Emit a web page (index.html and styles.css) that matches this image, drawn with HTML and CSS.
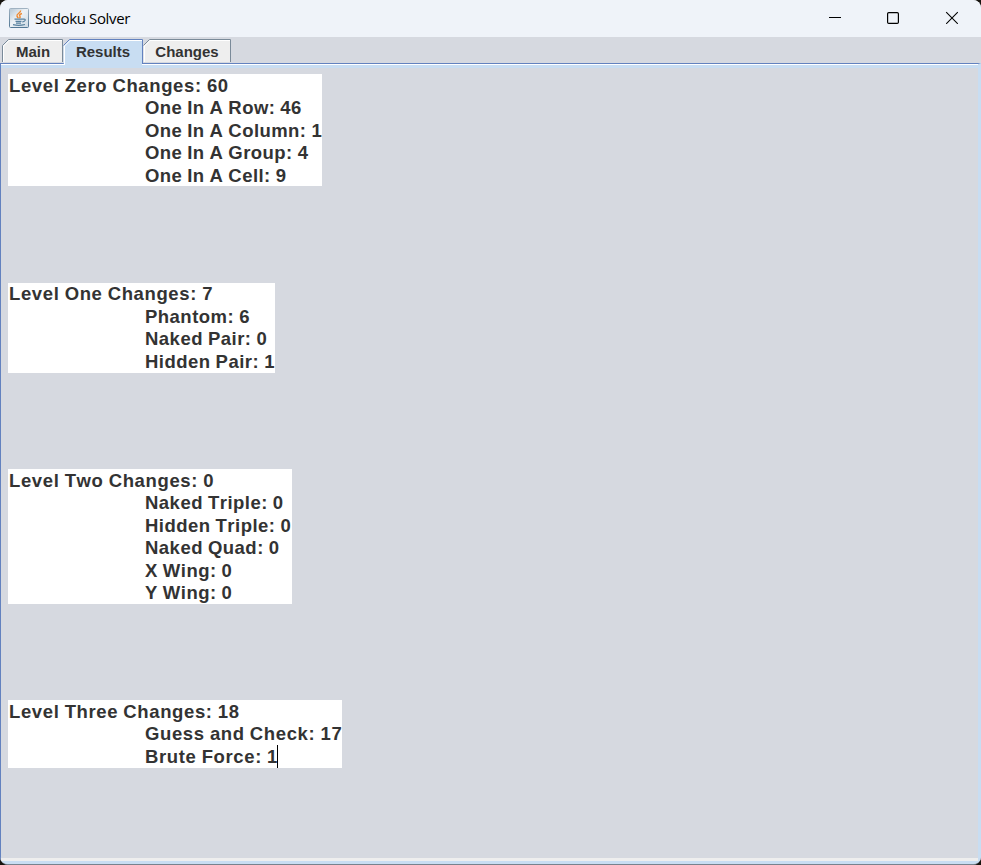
FILE: index.html
```html
<!DOCTYPE html>
<html lang="en">
<head>
<meta charset="utf-8">
<title>Sudoku Solver</title>
<link rel="stylesheet" href="styles.css">
</head>
<body>
<div class="window">
  <header class="titlebar">
    <svg class="logo" width="20" height="20" viewBox="0 0 20 20">
      <defs><linearGradient id="g" x1="0" y1="0" x2="1" y2="1"><stop offset="0" stop-color="#b4c4d2"/><stop offset=".45" stop-color="#edf2f6"/><stop offset="1" stop-color="#cbd8e2"/></linearGradient>
      <linearGradient id="b" x1="0" y1="0" x2="0" y2="1"><stop offset="0" stop-color="#a0b2c2"/><stop offset="1" stop-color="#527895"/></linearGradient></defs>
      <rect x=".5" y=".5" width="19" height="19" rx="1" fill="url(#g)" stroke="url(#b)"/>
      <path d="M11.500 2.500C12 5 7.500 5.500 8 8q.3 1.300 1.500 2M13 5.500Q9.500 6.500 11 8.300q.6 1-.7 1.900" fill="none" stroke="#ee8b35" stroke-width="1.500"/>
      <path d="M5.500 11.200h8M6.500 13.300h6M7 15.200h5M13.500 11.200q3.500-.6 2.500 1.300-.8 1.300-2.800 1.500M4 16.700q6 1.400 12-.2" fill="none" stroke="#57809e" stroke-width="1.200"/>
    </svg>
    <span class="title">Sudoku Solver</span>
    <svg class="controls" width="130" height="14" viewBox="0 0 130 14" fill="none" stroke="#000">
      <path d="M0 7.500h12" stroke-width="1"/>
      <rect x="58.600" y="2.600" width="10.800" height="10.800" rx="1.200" stroke-width="1.200"/>
      <path d="M117.200 2.200l11.600 11.600M128.800 2.200l-11.600 11.600" stroke-width="1.100"/>
    </svg>
  </header>
  <nav class="tabs">
    <div class="tab main"><svg width="61" height="23"><path d="M.5 23V6.500L6.500.5H60.500V23" fill="#eee" stroke="#7a8a99"/><path d="M1.500 23V7L7 1.500H60" fill="none" stroke="#fff"/></svg><span>Main</span></div>
    <div class="tab results"><svg width="80" height="26"><path d="M.5 24.500V6.500L6.500.5H79.500V24.500H79V26H1V24.500Z" fill="#c8ddf2"/><path d="M1.500 26V7L7 1.500H79" fill="none" stroke="#fff"/><path d="M.5 6.500L6.500.5H79.500V25" fill="none" stroke="#6382bf"/></svg><span>Results</span></div>
    <div class="tab changes"><svg width="88" height="23"><path d="M.5 6.500L6.500.5H87.500V23H.5Z" fill="#eee"/><path d="M1.500 23V7L7 1.500H87" fill="none" stroke="#fff"/><path d="M.5 6.500L6.500.5H87.500V23" fill="none" stroke="#7a8a99"/></svg><span>Changes</span></div>
  </nav>
  <main class="content">
    <section class="level zero"><p>Level Zero Changes: 60</p><p class="sub">One In A Row: 46</p><p class="sub">One In A Column: 1</p><p class="sub">One In A Group: 4</p><p class="sub">One In A Cell: 9</p></section>
    <section class="level one"><p>Level One Changes: 7</p><p class="sub">Phantom: 6</p><p class="sub">Naked Pair: 0</p><p class="sub">Hidden Pair: 1</p></section>
    <section class="level two"><p>Level Two Changes: 0</p><p class="sub">Naked Triple: 0</p><p class="sub">Hidden Triple: 0</p><p class="sub">Naked Quad: 0</p><p class="sub">X Wing: 0</p><p class="sub">Y Wing: 0</p></section>
    <section class="level three"><p>Level Three Changes: 18</p><p class="sub">Guess and Check: 17</p><p class="sub">Brute Force: 1<i class="caret"></i></p></section>
  </main>
  <footer class="bottom"></footer>
</div>
</body>
</html>
```
FILE: styles.css
```css
* { box-sizing: border-box; }
body { margin: 0; background: #17140f; overflow: hidden; }
.window { width: 981px; height: 865px; border-radius: 8px; overflow: hidden; display: flex; flex-direction: column; background: #d6d9e0; border-bottom: 1px solid #76828d; }
.titlebar { height: 37px; flex: none; display: flex; align-items: center; padding: 0 22px 0 9px; background: #eff3f9; }
.logo { flex: none; margin-top: -1px; }
.title { margin-left: 6px; margin-top: -2px; font: 15px/20px "Open Sans", "Noto Sans", sans-serif; letter-spacing: -.36px; color: #000; white-space: nowrap; }
.controls { margin-left: auto; margin-top: -4px; }
.tabs { height: 26px; flex: none; display: flex; padding: 2px 0 0 2px; }
.tab { position: relative; height: 24px; font: bold 15px/24px "Liberation Sans", Arial, sans-serif; color: #333; text-align: center; }
.tab svg { position: absolute; left: 0; top: 0; display: block; }
.tab span { position: relative; top: 1px; white-space: nowrap; }
.main { width: 61px; padding-left: 1px; }
.results { width: 80px; z-index: 2; }
.changes { width: 88px; }
.content { flex: 1; display: flex; flex-direction: column; align-items: flex-start; border-top: 1px solid #6382bf; border-left: 1px solid #6382bf; border-right: 3px solid #c8ddf2; padding: 10px 0 0 7px; background: linear-gradient(#fff 0 1px, #c8ddf2 1px 4px, #d6d9e0 4px); }
.level { flex: none; background: #fff; font: bold 18.500px/22.500px "Liberation Sans", Arial, sans-serif; font-kerning: none; letter-spacing: .63px; word-spacing: -.6px; color: #333; padding-left: 1px; }
.level p { margin: 0; height: 22.500px; white-space: nowrap; }
.level .sub { padding-left: 136px; }
.zero { width: 314px; height: 112px; margin-bottom: 97px; padding-top: .5px; }
.zero .sub { letter-spacing: .44px; }
.one { width: 267px; height: 90px; margin-bottom: 96px; }
.one .sub { letter-spacing: .48px; }
.two { width: 284px; height: 135px; margin-bottom: 96px; padding-top: .5px; }
.two .sub { letter-spacing: .48px; }
.three { width: 334px; height: 68px; padding-top: .5px; }
.caret { display: inline-block; width: 1px; height: 23px; margin: -1px 0 0 -1px; background: #000; vertical-align: top; }
.bottom { height: 6px; flex: none; background: linear-gradient(#eee 0 3px, #c8ddf2 3px); border-left: 1px solid #6382bf; border-right: 3px solid #c8ddf2; }
```
